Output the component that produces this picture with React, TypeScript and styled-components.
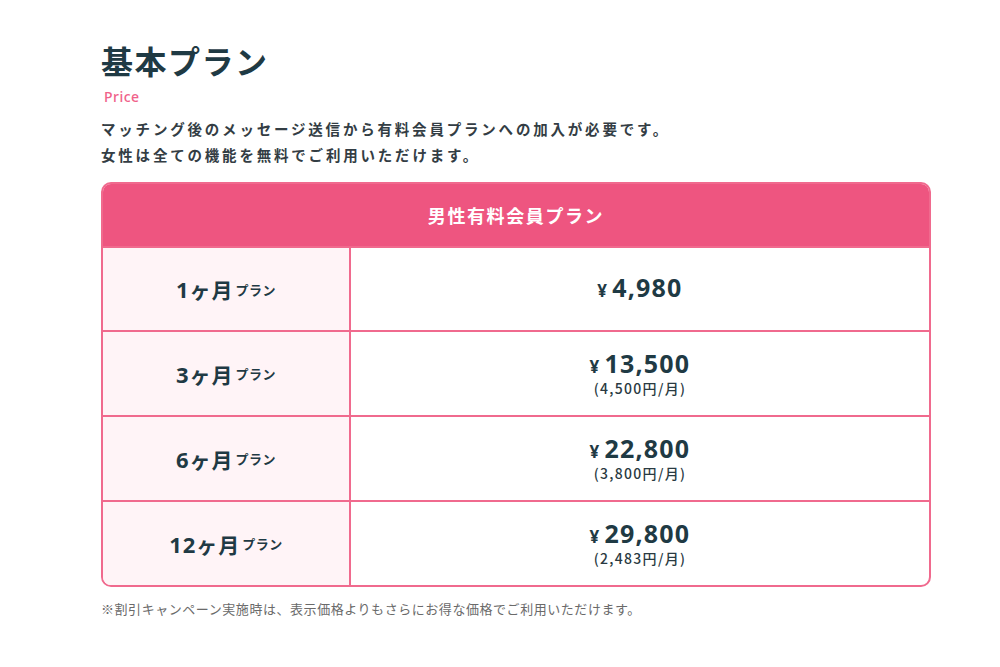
import React from "react";
import styled, { createGlobalStyle } from "styled-components";

const Global = createGlobalStyle`
  html, body { margin: 0; padding: 0; background: #fff; }
  body { font-family: "Noto Sans CJK JP", "Noto Sans", sans-serif; color: #1f3a44; }
`;

const Page = styled.div`
  width: 830px;
  padding: 36px 0 40px 101px;
`;

const Title = styled.h1`
  margin: 0;
  font-size: 32px;
  line-height: 48px;
  font-weight: 700;
  color: #1f3a44;
  letter-spacing: 1.5px;
`;

const Sub = styled.div`
  margin: 4px 0 0 3px;
  font-family: "Noto Sans", sans-serif;
  font-size: 14px;
  line-height: 18px;
  font-weight: 500;
  color: #f0628a;
  letter-spacing: 0.5px;
`;

const Lead = styled.p`
  margin: 10px 0 14px;
  font-size: 14.5px;
  line-height: 26px;
  font-weight: 700;
  letter-spacing: 2.8px;
  color: #333d44;
`;

const Card = styled.div`
  border: 2px solid #f06a8e;
  border-radius: 10px;
  overflow: hidden;
`;

const Header = styled.div`
  height: 62px;
  background: #ee5580;
  color: #fff;
  font-size: 18px;
  font-weight: 700;
  display: flex;
  align-items: center;
  justify-content: center;
  letter-spacing: 1.6px;
`;

const Row = styled.div`
  display: grid;
  grid-template-columns: 248px 1fr;
  height: 85px;
  border-top: 2px solid #f06a8e;
  box-sizing: border-box;
  &:nth-child(2) { height: 84px; }
`;

const Label = styled.div`
  background: #fff4f7;
  border-right: 2px solid #f06a8e;
  display: flex;
  align-items: center;
  justify-content: center;
  font-weight: 700;
  color: #1f3a44;
`;

const Months = styled.span`
  font-size: 22px;
  letter-spacing: 1px;
  font-family: "Noto Sans", "Noto Sans CJK JP", sans-serif;
  & > span { font-family: "Noto Sans CJK JP", sans-serif; font-size: 21px; }
`;

const Small = styled.span`
  font-size: 13px;
  margin-left: 2px;
  letter-spacing: 0.5px;
`;

const PriceCell = styled.div`
  display: flex;
  flex-direction: column;
  align-items: center;
  justify-content: center;
  color: #1f3a44;
`;

const Price = styled.div`
  font-family: "Noto Sans", sans-serif;
  font-size: 25px;
  line-height: 27px;
  font-weight: 700;
  letter-spacing: 1.2px;
`;

const Yen = styled.span`
  font-size: 17px;
  margin-right: 4px;
`;

const Per = styled.div`
  font-size: 14px;
  line-height: 17px;
  font-weight: 500;
  letter-spacing: 1.3px;
  color: #2a3a42;
`;

const Note = styled.p`
  margin: 12px 0 0;
  font-size: 13px;
  letter-spacing: 0.55px;
  color: #6a6a6a;
`;

const plans = [
  { m: "1", price: "4,980" },
  { m: "3", price: "13,500", per: "(4,500円/月)" },
  { m: "6", price: "22,800", per: "(3,800円/月)" },
  { m: "12", price: "29,800", per: "(2,483円/月)" },
];

export default function App() {
  return (
    <>
      <Global />
      <Page>
        <Title>基本プラン</Title>
        <Sub>Price</Sub>
        <Lead>
          マッチング後のメッセージ送信から有料会員プランへの加入が必要です。
          <br />
          女性は全ての機能を無料でご利用いただけます。
        </Lead>
        <Card>
          <Header>男性有料会員プラン</Header>
          {plans.map((p) => (
            <Row key={p.m}>
              <Label>
                <Months>
                  {p.m}
                  <span>ヶ月</span>
                </Months>
                <Small>プラン</Small>
              </Label>
              <PriceCell>
                <Price>
                  <Yen>¥</Yen>
                  {p.price}
                </Price>
                {p.per && <Per>{p.per}</Per>}
              </PriceCell>
            </Row>
          ))}
        </Card>
        <Note>※割引キャンペーン実施時は、表示価格よりもさらにお得な価格でご利用いただけます。</Note>
      </Page>
    </>
  );
}
